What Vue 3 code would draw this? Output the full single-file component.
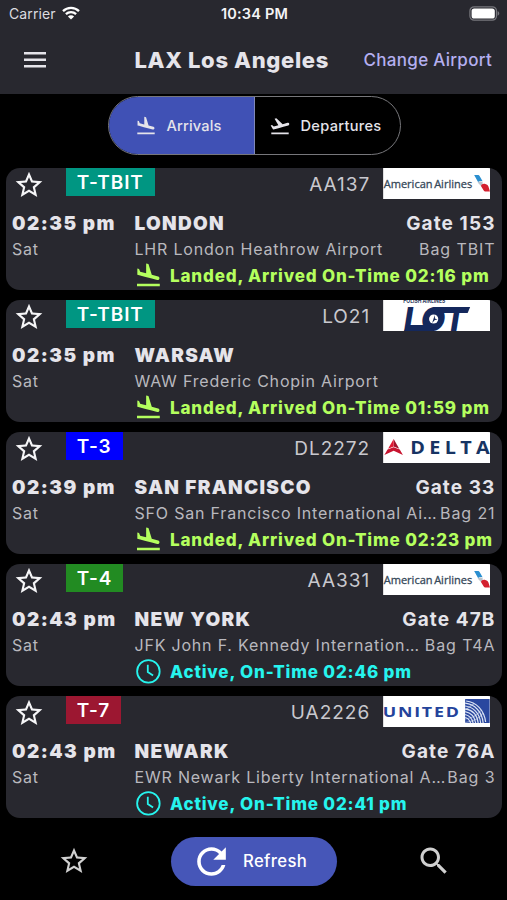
<script setup>
const landPath =
  'M2.5 19h19v2h-19v-2zm7.18-5.73l4.35 1.16 5.31 1.42c.8.21 1.62-.26 1.84-1.06.21-.8-.26-1.62-1.06-1.84l-5.31-1.42-2.76-9.02L10.12 2v8.28L5.15 8.95l-.93-2.32-1.45-.39v5.17l1.6.43 5.31 1.43z'
const takeoffPath =
  'M2.5 19h19v2h-19v-2zm19.57-9.36c-.21-.8-1.04-1.28-1.84-1.06L14.92 10l-6.9-6.43-1.93.51 4.14 7.17-4.97 1.33-1.97-1.54-1.45.39 1.82 3.16.77 1.33 1.6-.43 5.31-1.42 4.35-1.16L21 11.49c.81-.23 1.28-1.05 1.07-1.85z'
const starPath =
  'M22 9.24l-7.19-.62L12 2 9.19 8.63 2 9.24l5.46 4.73L5.82 21 12 17.27 18.18 21l-1.63-7.03L22 9.24zM12 15.4l-3.76 2.27 1-4.28-3.32-2.88 4.38-.38L12 6.1l1.71 4.04 4.38.38-3.32 2.88 1 4.28L12 15.4z'

const flights = [
  { terminal: 'T-TBIT', tone: 'teal', number: 'AA137', airline: 'american', time: '02:35 pm', day: 'Sat', city: 'LONDON', airport: 'LHR London Heathrow Airport', gate: 'Gate 153', bag: 'Bag TBIT', status: 'landed', text: 'Landed, Arrived On-Time 02:16 pm' },
  { terminal: 'T-TBIT', tone: 'teal', number: 'LO21', airline: 'lot', time: '02:35 pm', day: 'Sat', city: 'WARSAW', airport: 'WAW Frederic Chopin Airport', gate: '', bag: '', status: 'landed', text: 'Landed, Arrived On-Time 01:59 pm' },
  { terminal: 'T-3', tone: 'blue', number: 'DL2272', airline: 'delta', time: '02:39 pm', day: 'Sat', city: 'SAN FRANCISCO', airport: 'SFO San Francisco International Ai…', gate: 'Gate 33', bag: 'Bag 21', status: 'landed', text: 'Landed, Arrived On-Time 02:23 pm' },
  { terminal: 'T-4', tone: 'green', number: 'AA331', airline: 'american', time: '02:43 pm', day: 'Sat', city: 'NEW YORK', airport: 'JFK John F. Kennedy Internation…', gate: 'Gate 47B', bag: 'Bag T4A', status: 'active', text: 'Active, On-Time 02:46 pm' },
  { terminal: 'T-7', tone: 'red', number: 'UA2226', airline: 'united', time: '02:43 pm', day: 'Sat', city: 'NEWARK', airport: 'EWR Newark Liberty International A…', gate: 'Gate 76A', bag: 'Bag 3', status: 'active', text: 'Active, On-Time 02:41 pm' },
]
</script>

<template>
  <div class="screen">
    <div class="status-bar">
      <div class="carrier">
        <span>Carrier</span>
        <svg class="wifi" viewBox="0 0 18 14">
          <path d="M1 5.2a11.5 11.5 0 0 1 16 0" />
          <path d="M3.9 8.2a7.4 7.4 0 0 1 10.2 0" />
          <path class="solid" d="M9 13.6 5.9 10.5a4.4 4.4 0 0 1 6.2 0z" />
        </svg>
      </div>
      <div class="clock">10:34 PM</div>
      <svg class="battery" viewBox="0 0 31 15">
        <rect x="0.9" y="0.8" width="26.6" height="13.4" rx="4.2" />
        <rect class="level" x="2.6" y="2.5" width="23.2" height="10" rx="2.6" />
        <path class="cap" d="M28.6 5.3c2.2.6 2.2 3.8 0 4.4z" />
      </svg>
    </div>

    <header class="header">
      <svg class="menu" viewBox="0 0 22 16">
        <path d="M0 0h22v2.6H0zM0 6.5h22v2.6H0zM0 12.9h22v2.6H0z" />
      </svg>
      <h1>LAX Los Angeles</h1>
      <a class="change">Change Airport</a>
    </header>

    <div class="toggle">
      <div class="half active">
        <svg viewBox="0 0 24 24"><path :d="landPath" /></svg>
        <span>Arrivals</span>
      </div>
      <div class="half">
        <svg viewBox="0 0 24 24"><path :d="takeoffPath" /></svg>
        <span>Departures</span>
      </div>
    </div>

    <main class="list">
      <article v-for="f in flights" :key="f.number" class="card">
        <div class="top">
          <svg class="star" viewBox="0 0 24 24"><path :d="starPath" /></svg>
          <span class="badge" :class="f.tone">{{ f.terminal }}</span>
          <span class="number">{{ f.number }}</span>
          <svg class="logo" viewBox="0 0 107 31">
            <rect width="107" height="31" fill="#fff" />
            <g v-if="f.airline === 'american'">
              <text x="0.5" y="20" textLength="49" lengthAdjust="spacingAndGlyphs" class="aa">American</text>
              <text x="51" y="20" textLength="38" lengthAdjust="spacingAndGlyphs" class="aa">Airlines</text>
              <path d="M91 7h3.6c1 0 1.5.4 2 1.2l3 5.2c-1.5-.6-3.4-.3-4.7.6z" fill="#2b8fd0" />
              <path d="M94.5 14.5c2-1.6 4.4-1.2 5.3.4l-1.8 3.3z" fill="#b9c3cc" />
              <path d="M97.8 18.1c.5-2 2.3-2.6 4.4-2.1 2 .5 2.6 1.3 3.1 2.4l1.5 5.2h-4c-1.3 0-1.9-.5-2.4-1.4z" fill="#d3202f" />
            </g>
            <g v-else-if="f.airline === 'lot'">
              <text x="20" y="3" textLength="42" lengthAdjust="spacingAndGlyphs" class="polish">POLISH AIRLINES</text>
              <text x="20.5" y="31" textLength="62" lengthAdjust="spacingAndGlyphs" class="lot">LOT</text>
              <path d="M50 7h37l-2.5 6H60z" fill="#14285c" />
              <path d="M24 25h22l5 6H21z" fill="#14285c" />
              <circle cx="50.5" cy="19" r="8.5" fill="#14285c" />
              <circle cx="50.5" cy="19" r="4.6" fill="#fff" />
              <path d="M49 23l2.6-8 .2 3.5 2.5 1-2.6.5z" fill="#14285c" />
            </g>
            <g v-else-if="f.airline === 'delta'">
              <path d="M10.5 7l5.6 9.8-5.6-2.3z" fill="#a3132c" />
              <path d="M10.5 7v7.5l-5.6 2.3z" fill="#e01933" />
              <path d="M4.4 17.6l6.1-2.3 6.1 2.3 3.2 5.4-9.3-4.2L1.2 23z" fill="#c8142f" />
              <text x="27" y="21.5" textLength="84" lengthAdjust="spacingAndGlyphs" class="delta">DELTA</text>
            </g>
            <g v-else>
              <text x="-0.5" y="21" textLength="78" lengthAdjust="spacingAndGlyphs" class="united">UNITED</text>
              <rect x="82" y="3" width="24.5" height="24" fill="#2a479f" />
              <g fill="none" stroke="#dbe3f3" stroke-width="1.2">
                <path d="M82 7.2c9.5 1 17 8.5 18 19.8M82 10c8 1 14.5 7 15.5 17M82 12.8c7 1 12 6 13 14.2M82 15.6c5.5 1 9.5 5 10.5 11.4M82 18.5c4 1 7 4 8 8.5M82 21.5c2.5.5 4.5 2.5 5.5 5.5M83 5c10 1 18 9 19.500 21" />
                <path d="M82 26.5c8-1 15-5 18-9.5M82 23c7-1 12.5-4 15.5-8.500M82 14l9-6.500" opacity=".55" />
              </g>
            </g>
          </svg>
        </div>
        <div class="row main-row">
          <span class="time">{{ f.time }}</span>
          <span class="city">{{ f.city }}</span>
          <span class="gate">{{ f.gate }}</span>
        </div>
        <div class="row sub-row">
          <span class="day">{{ f.day }}</span>
          <span class="airport">{{ f.airport }}</span>
          <span class="bag">{{ f.bag }}</span>
        </div>
        <div class="status" :class="f.status">
          <svg v-if="f.status === 'landed'" viewBox="0 0 24 24"><path :d="landPath" /></svg>
          <svg v-else viewBox="0 0 24 24" class="outline">
            <circle cx="12" cy="12" r="9.4" />
            <path d="M11.5 6.5v6l4.4 3" />
          </svg>
          <span>{{ f.text }}</span>
        </div>
      </article>
    </main>

    <nav class="bottom">
      <svg class="fav" viewBox="0 0 24 24"><path :d="starPath" /></svg>
      <button class="refresh">
        <svg viewBox="0 0 24 24">
          <path d="M17.65 6.35C16.2 4.9 14.21 4 12 4c-4.42 0-7.99 3.58-7.99 8s3.57 8 7.99 8c3.73 0 6.84-2.55 7.73-6h-2.08c-.82 2.33-3.04 4-5.65 4-3.31 0-6-2.69-6-6s2.69-6 6-6c1.66 0 3.14.69 4.22 1.78L13 11h7V4l-2.35 2.35z" />
        </svg>
        <span>Refresh</span>
      </button>
      <svg class="search" viewBox="0 0 24 24">
        <path d="M15.5 14h-.79l-.28-.27C15.41 12.59 16 11.11 16 9.5 16 5.91 13.09 3 9.5 3S3 5.91 3 9.5 5.91 16 9.5 16c1.61 0 3.09-.59 4.23-1.57l.27.28v.79l5 4.99L20.49 19l-4.99-5zm-6 0C7.01 14 5 11.99 5 9.5S7.01 5 9.5 5 14 7.01 14 9.5 11.99 14 9.5 14z" />
      </svg>
    </nav>
  </div>
</template>

<style>
body {
  background: #000;
}
</style>

<style scoped>
.screen {
  width: 507px;
  height: 900px;
  overflow: hidden;
  display: flex;
  flex-direction: column;
  background: #000;
  color: #e5e4ea;
  font-family: Inter, sans-serif;
  white-space: nowrap;
}
svg {
  display: block;
  flex: none;
  fill: currentColor;
}
.status-bar {
  height: 27px;
  flex: none;
  display: grid;
  grid-template-columns: 1fr auto 1fr;
  align-items: center;
  padding: 0 7px 0 9px;
  background: #28282f;
  font-size: 14px;
}
.carrier {
  display: flex;
  align-items: center;
  gap: 6px;
  color: #dcdce0;
  letter-spacing: 0.1px;
}
.wifi {
  width: 18px;
  height: 14px;
  margin-top: -1px;
  fill: none;
  stroke: #fff;
  stroke-width: 2.3;
}
.wifi .solid {
  fill: #fff;
  stroke: none;
}
.clock {
  font-weight: 600;
  color: #f4f4f6;
  font-size: 14.5px;
  letter-spacing: 0.2px;
}
.battery {
  justify-self: end;
  width: 31px;
  height: 15px;
  fill: none;
  stroke: #77777d;
  stroke-width: 1.2;
}
.battery .level {
  fill: #fff;
  stroke: none;
}
.battery .cap {
  fill: #77777d;
  stroke: none;
}
.header {
  height: 66.5px;
  flex: none;
  display: flex;
  align-items: center;
  padding: 0 15px 0 24px;
  background: #28282f;
}
.menu {
  width: 22px;
  height: 16px;
}
h1 {
  margin: 0 0 0 88.5px;
  font-size: 22px;
  font-weight: 800;
  letter-spacing: 0.65px;
}
.change {
  margin-left: auto;
  font-size: 17px;
  font-weight: 450;
  letter-spacing: 0.3px;
  color: #b4aff0;
}
.toggle {
  flex: none;
  display: flex;
  box-sizing: border-box;
  width: 293px;
  height: 59px;
  margin: 2.5px 0 0 107.5px;
  border: 1.5px solid #77777b;
  border-radius: 30px;
  overflow: hidden;
}
.half {
  flex: 1;
  display: flex;
  align-items: center;
  gap: 10px;
  padding-left: 14px;
  font-size: 14.6px;
  font-weight: 500;
  letter-spacing: 0.3px;
}
.half.active {
  flex: none;
  width: 146px;
  box-sizing: border-box;
  padding-left: 26px;
  border-right: 1px solid #8088b8;
  background: #4051b5;
  letter-spacing: 0.15px;
}
.half svg {
  width: 22px;
  height: 22px;
}
.list {
  flex: none;
  display: flex;
  flex-direction: column;
  gap: 10px;
  padding: 13px 5px 0 6px;
}
.card {
  height: 122px;
  border-radius: 14px;
  background: #28282f;
  overflow: hidden;
}
.top {
  display: flex;
  align-items: flex-start;
  height: 42px;
  padding-right: 12px;
}
.star {
  width: 32px;
  height: 32px;
  margin: 1px 0 0 7px;
  color: #f5f5f7;
}
.badge {
  margin-left: 20.7px;
  height: 28px;
  line-height: 30px;
  padding: 0 11px;
  font-size: 19px;
  font-weight: 600;
  letter-spacing: 0.9px;
  color: #fff;
}
.teal { background: #009682; }
.blue { background: #0000fe; }
.green { background: #228b22; }
.red { background: #9c1731; }
.number {
  margin-left: auto;
  margin-right: 12.5px;
  line-height: 34px;
  font-size: 19px;
  letter-spacing: 1px;
  color: #c9c8ce;
}
.logo {
  width: 107.3px;
  height: 31px;
}
.aa {
  font: 500 11.5px 'Open Sans', sans-serif;
  fill: #36495a;
  stroke: #36495a;
  stroke-width: 0.3px;
}
.polish {
  font: 700 6px Inter, sans-serif;
  fill: #30405f;
}
.lot {
  font: italic 800 33px Inter, sans-serif;
  fill: #14285c;
}
.delta {
  font: 700 18px 'Open Sans', sans-serif;
  letter-spacing: 4px;
  fill: #173463;
}
.united {
  font: 700 15px 'Open Sans', sans-serif;
  letter-spacing: 1.5px;
  fill: #24439b;
}
.row {
  display: grid;
  grid-template-columns: 122.5px 1fr auto;
  align-items: center;
  padding: 0 6.5px 0 6px;
}
.main-row {
  height: 26px;
  font-size: 19px;
  font-weight: 900;
  letter-spacing: 1.3px;
}
.time {
  letter-spacing: 1.45px;
}
.gate {
  font-weight: 650;
  letter-spacing: 1.1px;
}
.sub-row {
  height: 27px;
  font-size: 16px;
  letter-spacing: 0.8px;
  color: #b9b8be;
}
.bag {
  letter-spacing: 0.9px;
}
.sub-row span {
  margin-top: -1px;
}
.status {
  display: flex;
  align-items: center;
  gap: 7px;
  height: 25.5px;
  padding-left: 128.3px;
  font-size: 17px;
  font-weight: 800;
  letter-spacing: 0.83px;
}
.status svg {
  width: 28.8px;
  height: 28.8px;
}
.landed { color: #b4ff5e; }
.active.status { color: #26f4ee; }
.outline {
  fill: none;
  stroke: currentColor;
  stroke-width: 1.5;
}
.bottom {
  flex: 1;
  display: flex;
  align-items: center;
  justify-content: space-between;
  padding: 4px 55.5px 0 58px;
  color: #d0d0d0;
}
.fav {
  width: 32px;
  height: 32px;
}
.refresh {
  display: flex;
  align-items: center;
  gap: 10px;
  box-sizing: border-box;
  width: 166px;
  height: 49px;
  margin-left: 1.5px;
  padding: 0 0 0 19.5px;
  border: 0;
  border-radius: 25px;
  background: #4656b8;
  color: #fff;
  font: 500 16.7px Inter, sans-serif;
  letter-spacing: 0.35px;
}
.refresh svg {
  width: 43px;
  height: 43px;
}
.search {
  width: 36px;
  height: 36px;
}
</style>
